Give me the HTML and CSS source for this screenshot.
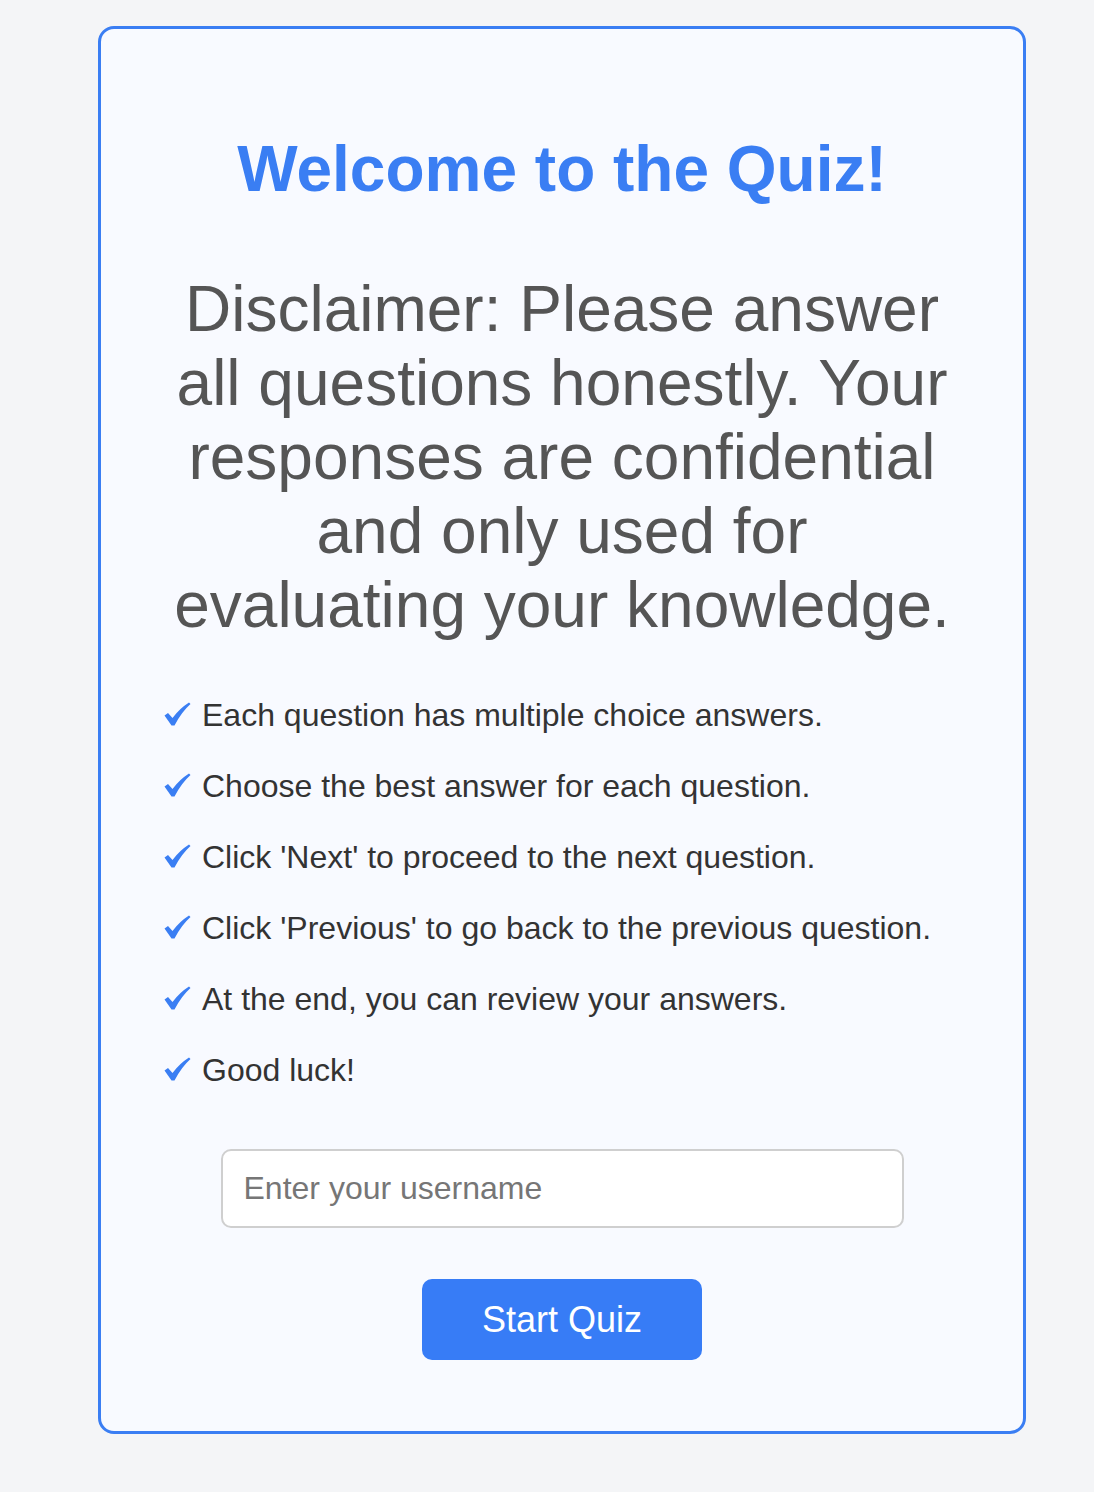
FILE: index.html
```html
<!DOCTYPE html>
<html>
<head>
<meta charset="utf-8">
<link rel="stylesheet" href="styles.css">
</head>
<body>
<div class="card">
  <h1 class="title">Welcome to the Quiz!</h1>
  <p class="disclaimer">Disclaimer: Please answer all questions honestly. Your responses are confidential and only used for evaluating your knowledge.</p>
  <ul class="rules">
    <li><span class="check"><svg viewBox="0 0 27 24" width="27" height="24"><path d="M0.5 13.5 L4 11 L8.5 16 Q15.5 6.5 25 0.5 L26.5 2 Q17.5 10 10.5 23.5 L7.5 23.5 Z"/></svg></span>Each question has multiple choice answers.</li>
    <li><span class="check"><svg viewBox="0 0 27 24" width="27" height="24"><path d="M0.5 13.5 L4 11 L8.5 16 Q15.5 6.5 25 0.5 L26.5 2 Q17.5 10 10.5 23.5 L7.5 23.5 Z"/></svg></span>Choose the best answer for each question.</li>
    <li><span class="check"><svg viewBox="0 0 27 24" width="27" height="24"><path d="M0.5 13.5 L4 11 L8.5 16 Q15.5 6.5 25 0.5 L26.5 2 Q17.5 10 10.5 23.5 L7.5 23.5 Z"/></svg></span>Click 'Next' to proceed to the next question.</li>
    <li><span class="check"><svg viewBox="0 0 27 24" width="27" height="24"><path d="M0.5 13.5 L4 11 L8.5 16 Q15.5 6.5 25 0.5 L26.5 2 Q17.5 10 10.5 23.5 L7.5 23.5 Z"/></svg></span>Click 'Previous' to go back to the previous question.</li>
    <li><span class="check"><svg viewBox="0 0 27 24" width="27" height="24"><path d="M0.5 13.5 L4 11 L8.5 16 Q15.5 6.5 25 0.5 L26.5 2 Q17.5 10 10.5 23.5 L7.5 23.5 Z"/></svg></span>At the end, you can review your answers.</li>
    <li><span class="check"><svg viewBox="0 0 27 24" width="27" height="24"><path d="M0.5 13.5 L4 11 L8.5 16 Q15.5 6.5 25 0.5 L26.5 2 Q17.5 10 10.5 23.5 L7.5 23.5 Z"/></svg></span>Good luck!</li>
  </ul>
  <input class="username" type="text" placeholder="Enter your username">
  <button class="start">Start Quiz</button>
</div>
</body>
</html>
```
FILE: styles.css
```css
html, body {
  margin: 0;
  padding: 0;
  background: #f4f5f7;
}
body {
  font-family: "Liberation Sans", Arial, sans-serif;
  padding: 26px 0 58px 98px;
}
.card {
  box-sizing: border-box;
  width: 928px;
  height: 1408px;
  border: 3px solid #3a7ef3;
  border-radius: 16px;
  background: #f8faff;
  padding: 103px 60px 0;
  display: flex;
  flex-direction: column;
  align-items: center;
}
.title {
  margin: 0;
  font-size: 64px;
  font-weight: bold;
  color: #3a7ef3;
  text-align: center;
  line-height: normal;
}
.disclaimer {
  margin: 66px 0 0;
  font-size: 64px;
  color: #555;
  text-align: center;
  line-height: normal;
  max-width: 790px;
}
.rules {
  list-style: none;
  margin: 55px 0 0;
  padding: 0 0 0 3px;
  align-self: stretch;
}
.rules li {
  font-size: 32px;
  color: #333;
  line-height: 37px;
  margin-bottom: 34px;
  display: flex;
  align-items: baseline;
}
.check {
  width: 38px;
  flex: none;
}
.check svg {
  display: inline-block;
  fill: #3a7ef3;
  vertical-align: baseline;
}
.username {
  box-sizing: border-box;
  width: 683px;
  height: 79px;
  margin-top: 26px;
  border: 2px solid #cfcfcf;
  border-radius: 10px;
  background: #fff;
  padding: 0 21px;
  font-family: "Liberation Sans", Arial, sans-serif;
  font-size: 32px;
  color: #333;
  outline: none;
}
.username::placeholder {
  color: #767676;
}
.start {
  margin-top: 51px;
  width: 280px;
  height: 81px;
  border: none;
  border-radius: 10px;
  background: #377cf6;
  color: #fff;
  font-family: "Liberation Sans", Arial, sans-serif;
  font-size: 36px;
}
```
